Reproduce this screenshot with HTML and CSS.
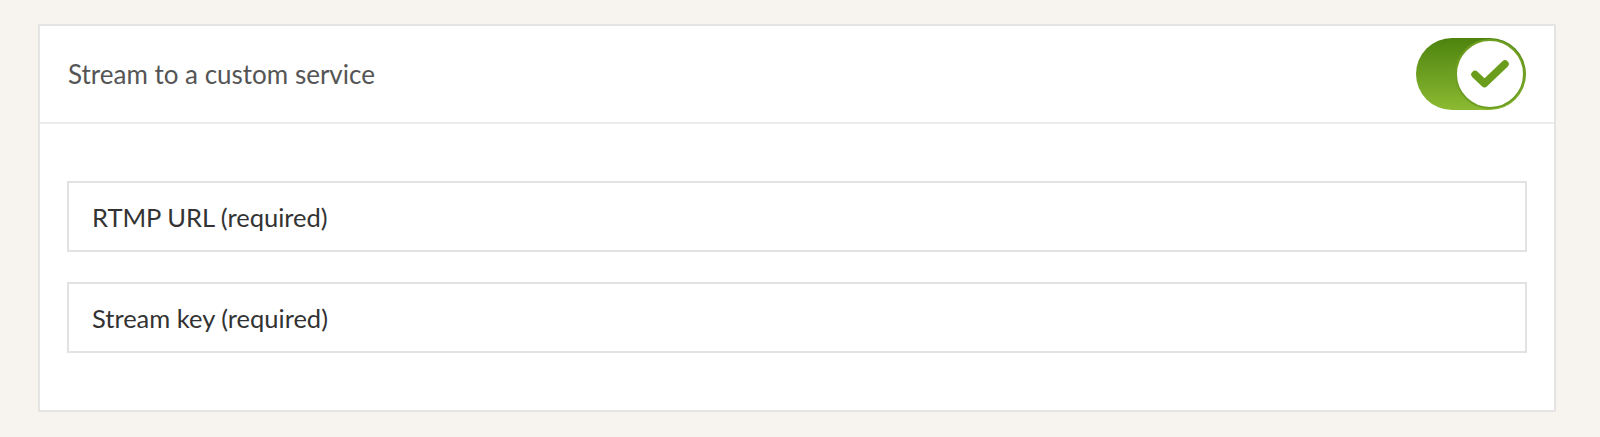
FILE: index.html
```html
<!DOCTYPE html>
<html>
<head>
<meta charset="utf-8">
<link rel="stylesheet" href="styles.css">
</head>
<body>
<div class="card">
  <div class="card-header">
    <span class="title">Stream to a custom service</span>
    <div class="toggle">
      <div class="knob">
        <svg width="40" height="30" viewBox="0 0 40 30"><path d="M5 15.5 L14.5 24.5 L35 5" fill="none" stroke="#6b9d1c" stroke-width="7.5" stroke-linecap="round" stroke-linejoin="round"/></svg>
      </div>
    </div>
  </div>
  <div class="card-body">
    <div class="field">RTMP URL (required)</div>
    <div class="field">Stream key (required)</div>
  </div>
</div>
</body>
</html>
```
FILE: styles.css
```css
html, body {
  margin: 0;
  padding: 0;
  background: #f7f4ef;
}
body {
  padding: 24px 0 0 38px;
  font-family: Lato, "Noto Sans", sans-serif;
}
.card {
  width: 1518px;
  box-sizing: border-box;
  background: #fff;
  border: 2px solid #e4e4e4;
}
.card-header {
  height: 98px;
  box-sizing: border-box;
  border-bottom: 2px solid #ececec;
  display: flex;
  align-items: center;
  justify-content: space-between;
  padding: 0 28px 0 28px;
}
.title {
  font-size: 26px;
  color: #555;
}
.toggle {
  width: 110px;
  height: 72px;
  border-radius: 36px;
  background: linear-gradient(to bottom, #4d830e, #8cba33);
  display: flex;
  justify-content: flex-end;
  align-items: center;
  box-sizing: border-box;
  padding: 1px;
}
.knob {
  width: 70px;
  height: 70px;
  border-radius: 50%;
  background: #fff;
  box-sizing: border-box;
  border: 2px solid #6f9f22;
  display: flex;
  align-items: center;
  justify-content: center;
}
.card-body {
  padding: 57px 27px 57px 27px;
  display: flex;
  flex-direction: column;
  gap: 30px;
}
.field {
  height: 71px;
  box-sizing: border-box;
  border: 2px solid #e2e2e2;
  display: flex;
  align-items: center;
  padding-left: 23px;
  font-size: 25.5px;
  color: #333;
}
```
